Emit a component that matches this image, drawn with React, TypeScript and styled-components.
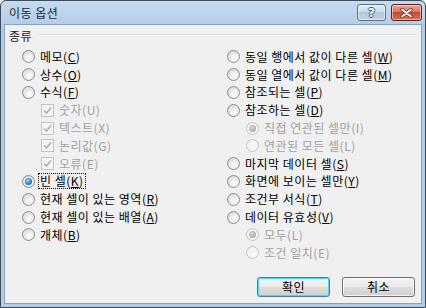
import styled, {createGlobalStyle} from "styled-components";

const GlobalStyle = createGlobalStyle`
    html, body {
        margin: 0;
        padding: 0;
        background: #ffffff;
    }
    body {
        font-family: "Noto Sans CJK KR", "Noto Sans", sans-serif;
        font-size: 12px;
    }
`;

const StyledWindow = styled.div`
    width: 426px;
    height: 308px;
    box-sizing: border-box;
    border: 1px solid #3c4d5e;
    border-radius: 6px 6px 0 0;
    background: linear-gradient(#c7dbef, #b4cde6 24px, #b4cde6);
    display: flex;
    flex-direction: column;
    overflow: hidden;
`;

const StyledTitleBar = styled.div`
    height: 23px;
    display: flex;
    align-items: center;
    padding: 0 3px 0 8px;
    flex-shrink: 0;
`;

const StyledTitle = styled.div`
    flex: 1;
    color: #1d2733;
    font-size: 12px;
    line-height: 14px;
    padding-top: 1px;
    letter-spacing: 0.5px;
`;

const StyledCaptionButton = styled.div<{$close?: boolean}>`
    width: ${p => p.$close ? 31 : 29}px;
    height: 17px;
    box-sizing: border-box;
    margin-left: ${p => p.$close ? 5 : 0}px;
    border: 1px solid ${p => p.$close ? "#5a2318" : "#5e7086"};
    border-radius: 3px;
    background: ${p => p.$close
        ? "linear-gradient(#e7a799, #d67a66 45%, #c44b33 50%, #d5715a)"
        : "linear-gradient(#e3ecf6, #cbd9e9 45%, #b3c7dc 50%, #c3d5e8)"};
    box-shadow: inset 0 0 0 1px rgba(255,255,255,0.5);
    display: flex;
    align-items: center;
    justify-content: center;
    color: white;
    font-family: "DejaVu Sans", sans-serif;
    font-weight: bold;
    font-size: 12px;
    text-shadow: -1px 0 #44556a, 1px 0 #44556a, 0 -1px #44556a, 0 1px #44556a;
`;

const StyledClient = styled.div`
    flex: 1;
    margin: 0 3px 3px 3px;
    border: 1px solid #8aa3bd;
    background: #f0f0f0;
    display: flex;
    flex-direction: column;
    padding: 2px 6px 6px 4px;
`;

const StyledGroupHeader = styled.div`
    display: flex;
    align-items: center;
    gap: 6px;
    height: 17px;
    color: #1a1a1a;
    letter-spacing: 0.5px;
`;

const StyledRule = styled.div`
    flex: 1;
    height: 0;
    border-top: 1px solid #d5dfe5;
    border-bottom: 1px solid #ffffff;
    margin-top: -1px;
    margin-right: -2px;
`;

const StyledColumns = styled.div`
    display: flex;
    padding-left: 13px;
    margin-top: 4px;
`;

const StyledColumn = styled.div<{$width?: number}>`
    display: flex;
    flex-direction: column;
    width: ${p => p.$width ? `${p.$width}px` : "auto"};
    flex: ${p => p.$width ? "none" : 1};
`;

const StyledOption = styled.div<{$indent?: boolean; $disabled?: boolean}>`
    display: flex;
    align-items: center;
    gap: 5px;
    height: 17.8px;
    padding-left: ${p => p.$indent ? 19 : 0}px;
    color: ${p => p.$disabled ? "#a2a2a2" : "#000000"};
    white-space: nowrap;
    line-height: 14px;
    letter-spacing: 0.5px;
`;

const StyledRadio = styled.span<{$checked?: boolean; $disabled?: boolean}>`
    width: 13px;
    height: 13px;
    box-sizing: border-box;
    border-radius: 50%;
    border: 1px solid ${p => p.$disabled ? "#c6c6c6" : "#8f8f8f"};
    background: ${p => p.$disabled
        ? "radial-gradient(circle at 60% 65%, #fafafa, #ececec)"
        : "radial-gradient(circle at 60% 65%, #f8f8f8 20%, #d4d4d4 85%)"};
    display: flex;
    align-items: center;
    justify-content: center;
    flex-shrink: 0;
    &::after {
        content: "";
        display: ${p => p.$checked ? "block" : "none"};
        width: 7px;
        height: 7px;
        border-radius: 50%;
        background: ${p => p.$disabled
            ? "radial-gradient(circle at 40% 35%, #d8d8d8, #9a9a9a)"
            : "radial-gradient(circle at 40% 35%, #9ad7f8, #1d79c4 60%, #0d4f8f)"};
    }
`;

const StyledCheck = styled.span`
    width: 13px;
    height: 13px;
    box-sizing: border-box;
    border: 1px solid #c3c3c3;
    background: #f5f5f5;
    display: flex;
    align-items: center;
    justify-content: center;
    flex-shrink: 0;
`;

const StyledLabel = styled.span<{$focus?: boolean}>`
    outline: ${p => p.$focus ? "1px dotted #000" : "none"};
    outline-offset: 0;
    padding: 0 1px;
    margin-left: -1px;
    u {
        text-decoration: underline;
        text-underline-offset: 1px;
    }
`;

const StyledFooter = styled.div`
    margin-top: auto;
    display: flex;
    justify-content: flex-end;
    gap: 12px;
`;

const StyledButton = styled.button<{$default?: boolean}>`
    width: 73px;
    height: 20px;
    padding: 0;
    border-radius: 3px;
    border: 1px solid ${p => p.$default ? "#3c7fb1" : "#707070"};
    background: linear-gradient(#f2f2f2, #ebebeb 50%, #dddddd 51%, #cfcfcf);
    box-shadow: inset 0 0 0 1px ${p => p.$default ? "#48d8fb" : "rgba(255,255,255,0.7)"};
    font-family: "Noto Sans CJK KR", sans-serif;
    font-size: 12px;
    color: #000;
    line-height: 14px;
    letter-spacing: 0.5px;
`;

type Opt = {
    label: string;
    key?: string;
    kind?: "radio" | "check";
    checked?: boolean;
    disabled?: boolean;
    indent?: boolean;
    focus?: boolean;
};

const leftOptions: Opt[] = [
    {label: "메모", key: "C"},
    {label: "상수", key: "O"},
    {label: "수식", key: "F"},
    {label: "숫자(U)", kind: "check", checked: true, disabled: true, indent: true},
    {label: "텍스트(X)", kind: "check", checked: true, disabled: true, indent: true},
    {label: "논리값(G)", kind: "check", checked: true, disabled: true, indent: true},
    {label: "오류(E)", kind: "check", checked: true, disabled: true, indent: true},
    {label: "빈 셀", key: "K", checked: true, focus: true},
    {label: "현재 셀이 있는 영역", key: "R"},
    {label: "현재 셀이 있는 배열", key: "A"},
    {label: "개체", key: "B"},
];

const rightOptions: Opt[] = [
    {label: "동일 행에서 값이 다른 셀", key: "W"},
    {label: "동일 열에서 값이 다른 셀", key: "M"},
    {label: "참조되는 셀", key: "P"},
    {label: "참조하는 셀", key: "D"},
    {label: "직접 연관된 셀만(I)", checked: true, disabled: true, indent: true},
    {label: "연관된 모든 셀(L)", disabled: true, indent: true},
    {label: "마지막 데이터 셀", key: "S"},
    {label: "화면에 보이는 셀만", key: "Y"},
    {label: "조건부 서식", key: "T"},
    {label: "데이터 유효성", key: "V"},
    {label: "모두(L)", checked: true, disabled: true, indent: true},
    {label: "조건 일치(E)", disabled: true, indent: true},
];

function CheckMark(){
    return (
        <svg width="9" height="9" viewBox="0 0 9 9">
            <path d="M1 4.5 L3.5 7 L8 1.5" fill="none" stroke="#b0b0b0" strokeWidth="1.6"/>
        </svg>
    );
}

function CloseGlyph(){
    return (
        <svg width="13" height="10" viewBox="0 0 13 10">
            <path d="M2 1.5 L11 8.5 M11 1.5 L2 8.5" stroke="#5a2a22" strokeWidth="3.4" strokeLinecap="round"/>
            <path d="M2 1.5 L11 8.5 M11 1.5 L2 8.5" stroke="#ffffff" strokeWidth="1.8" strokeLinecap="round"/>
        </svg>
    );
}

function Option({opt}: {opt: Opt}){
    return (
        <StyledOption $indent={opt.indent} $disabled={opt.disabled}>
            {opt.kind === "check"
                ? <StyledCheck>{opt.checked && <CheckMark/>}</StyledCheck>
                : <StyledRadio $checked={opt.checked} $disabled={opt.disabled}/>}
            <StyledLabel $focus={opt.focus}>
                {opt.label}
                {opt.key && <>(<u>{opt.key}</u>)</>}
            </StyledLabel>
        </StyledOption>
    );
}

export default function App(){
    return (
        <>
            <GlobalStyle/>
            <StyledWindow>
                <StyledTitleBar>
                    <StyledTitle>이동 옵션</StyledTitle>
                    <StyledCaptionButton>?</StyledCaptionButton>
                    <StyledCaptionButton $close><CloseGlyph/></StyledCaptionButton>
                </StyledTitleBar>
                <StyledClient>
                    <StyledGroupHeader>
                        종류
                        <StyledRule/>
                    </StyledGroupHeader>
                    <StyledColumns>
                        <StyledColumn $width={205}>
                            {leftOptions.map(o => <Option key={o.label} opt={o}/>)}
                        </StyledColumn>
                        <StyledColumn>
                            {rightOptions.map(o => <Option key={o.label} opt={o}/>)}
                        </StyledColumn>
                    </StyledColumns>
                    <StyledFooter>
                        <StyledButton $default>확인</StyledButton>
                        <StyledButton>취소</StyledButton>
                    </StyledFooter>
                </StyledClient>
            </StyledWindow>
        </>
    );
}
